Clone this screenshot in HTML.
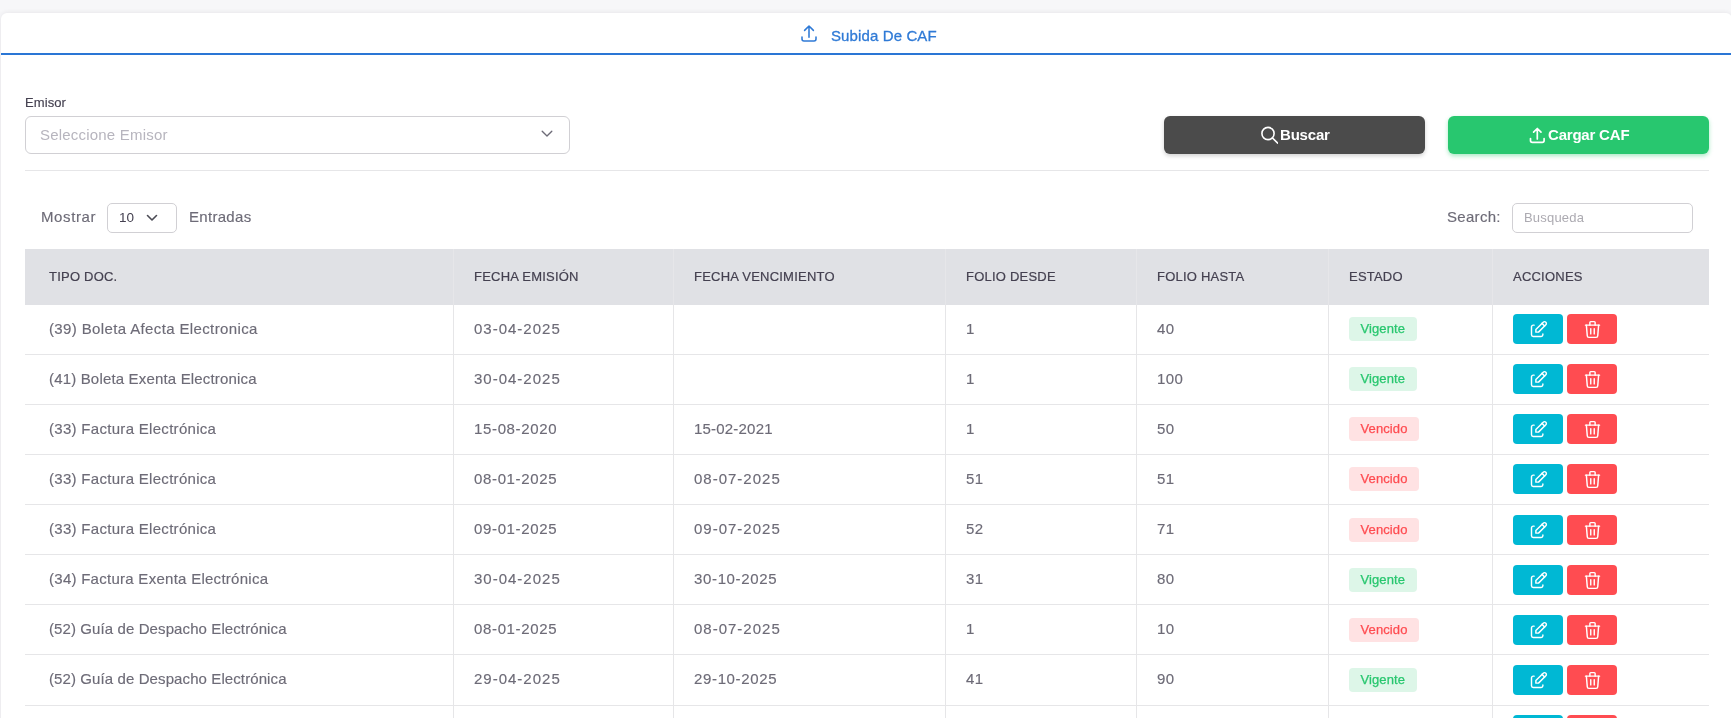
<!DOCTYPE html>
<html><head><meta charset="utf-8">
<style>
*{box-sizing:border-box;margin:0;padding:0}
html,body{width:1731px;height:718px;overflow:hidden}
body{will-change:transform;background:#f7f7f9;font-family:"Liberation Sans",sans-serif;color:#6f6b7d;position:relative}
.abs{position:absolute}
.card{position:absolute;left:1px;top:13px;width:1731px;height:800px;background:#fff;border-radius:6px;box-shadow:0 0 5px rgba(47,43,61,.1)}
.tabline{position:absolute;left:1px;top:53px;width:1730px;height:2px;background:#2a76d5}
.tabtxt{position:absolute;left:831px;top:27px;font-size:15px;font-weight:500;color:#2f7ad6;-webkit-text-stroke:.3px #2f7ad6;letter-spacing:.12px;white-space:nowrap;line-height:18px}
.lbl{position:absolute;left:25px;top:95px;font-size:13px;letter-spacing:.1px;color:#444050;-webkit-text-stroke:.15px #444050;line-height:15px}
.sel{position:absolute;left:25px;top:116px;width:545px;height:38px;border:1px solid #d1d0d4;border-radius:6px}
.sel span{position:absolute;left:14px;top:9px;font-size:15px;letter-spacing:.2px;color:#b7b5be;line-height:18px}
.btn{position:absolute;top:116px;height:38px;width:261px;border-radius:6px;color:#fff;font-size:15px;letter-spacing:-.2px;font-weight:bold;line-height:18px;box-shadow:0 2px 4px rgba(0,0,0,.18)}
.hr{position:absolute;left:25px;top:170px;width:1684px;height:1px;background:#e6e6e8}
.txt{position:absolute;font-size:15px;letter-spacing:.3px;line-height:18px;white-space:nowrap;color:#6d6b77;-webkit-text-stroke:.15px #6d6b77}
.box{position:absolute;border:1px solid #d1d0d4;border-radius:5px}
table{position:absolute;left:25px;top:249px;width:1684px;border-collapse:separate;border-spacing:0;table-layout:fixed}
th{height:56px;background:#e0e1e5;text-align:left;font-size:13px;font-weight:normal;color:#444050;-webkit-text-stroke:.2px #444050;padding:0 0 2px 20px;border-left:1px solid #e6e6e9;letter-spacing:.22px}
th:first-child{padding-left:24px;border-left:none}
td{height:50px;font-size:15px;letter-spacing:.35px;padding:0 0 3px 20px;border-left:1px solid #e6e6e8;border-bottom:1px solid #e6e6e8;color:#6d6b77;-webkit-text-stroke:.15px #6d6b77}
tr:nth-child(8) td{height:51px}
td.d{letter-spacing:.6px}
td:first-child{padding-left:24px;border-left:none}
.badge{display:inline-block;height:24px;line-height:24px;padding:0 11.5px;border-radius:4px;font-size:13px;font-weight:normal;letter-spacing:.1px;position:relative;top:1px;-webkit-text-stroke:.25px currentColor}
tr:nth-child(5) .badge,tr:nth-child(6) .badge,tr:nth-child(7) .badge,tr:nth-child(5) .ab,tr:nth-child(6) .ab,tr:nth-child(7) .ab{top:2px}
.vig{background:#ddf6e8;color:#28c76f}
.ven{background:#ffe2e3;color:#ff4c51}
.ab{display:inline-flex;align-items:center;justify-content:center;width:50px;height:30px;border-radius:4px;vertical-align:middle;position:relative;top:1px}
.ed{background:#00b8d4}
.dl{background:#ff4c51;margin-left:4px}
</style></head><body>
<div class="card"></div>
<div class="tabline"></div>
<svg class="abs" style="left:799px;top:23px" width="20" height="20" viewBox="0 0 20 20"><path d="M3 14v2a2 2 0 0 0 2 2h10a2 2 0 0 0 2-2v-2M10 14.3V3M5.6 7.4l4.4-4.4 4.4 4.4" fill="none" stroke="#2f7ad6" stroke-width="1.55" stroke-linecap="round" stroke-linejoin="round"/></svg>
<div class="tabtxt">Subida De CAF</div>

<div class="lbl">Emisor</div>
<div class="sel"><span>Seleccione Emisor</span>
<svg class="abs" style="left:514px;top:10.5px" width="14" height="12" viewBox="0 0 14 12"><path d="M2.2 3.2l4.8 4.8 4.8-4.8" fill="none" stroke="#6d6b77" stroke-width="1.35" stroke-linecap="round" stroke-linejoin="round"/></svg>
</div>

<div class="btn" style="left:1164px;background:#4b4b4b"><svg class="abs" style="left:96px;top:10px" width="18" height="18" viewBox="0 0 18 18"><circle cx="8" cy="7.5" r="6.1" fill="none" stroke="#fff" stroke-width="1.6"/><path d="M12.5 12l5 5" stroke="#fff" stroke-width="1.7" stroke-linecap="round"/></svg><span class="abs" style="left:116px;top:9.5px">Buscar</span></div>
<div class="btn" style="left:1448px;background:#28c76f;box-shadow:0 2px 4px rgba(40,199,111,.4)"><svg class="abs" style="left:81px;top:10px" width="18" height="18" viewBox="0 0 18 18"><path d="M1.5 12.5v2a1.8 1.8 0 0 0 1.8 1.8h10a1.8 1.8 0 0 0 1.8-1.8v-2M8.3 13V2.5M4.6 6.2l3.7-3.7 3.7 3.7" fill="none" stroke="#fff" stroke-width="1.7" stroke-linecap="round" stroke-linejoin="round"/></svg><span class="abs" style="left:100px;top:9.5px">Cargar CAF</span></div>
<div class="hr"></div>

<div class="txt" style="left:41px;top:208px;letter-spacing:.6px">Mostrar</div>
<div class="box" style="left:107px;top:203px;width:70px;height:30px"><span class="abs" style="left:11px;top:6px;font-size:13.5px;color:#444050;line-height:15px">10</span><svg class="abs" style="left:38px;top:10px" width="12" height="8" viewBox="0 0 12 8"><path d="M1.5 1.5l4.5 4.5 4.5-4.5" fill="none" stroke="#4b4b55" stroke-width="1.6" stroke-linecap="round" stroke-linejoin="round"/></svg></div>
<div class="txt" style="left:189px;top:208px">Entradas</div>
<div class="txt" style="left:1447px;top:208px;letter-spacing:.3px">Search:</div>
<div class="box" style="left:1512px;top:203px;width:181px;height:30px"><span class="abs" style="left:11px;top:6px;font-size:13px;letter-spacing:.2px;color:#acaab1;line-height:15px">Busqueda</span></div>

<table>
<colgroup><col style="width:428px"><col style="width:220px"><col style="width:272px"><col style="width:191px"><col style="width:192px"><col style="width:164px"><col></colgroup>
<thead><tr><th>TIPO DOC.</th><th>FECHA EMISIÓN</th><th>FECHA VENCIMIENTO</th><th>FOLIO DESDE</th><th>FOLIO HASTA</th><th>ESTADO</th><th>ACCIONES</th></tr></thead>
<tbody>
<tr><td style="letter-spacing:0.37px">(39) Boleta Afecta Electronica</td><td class="d" style="letter-spacing:1.0px">03-04-2025</td><td></td><td>1</td><td>40</td><td><span class="badge vig">Vigente</span></td><td><span class="ab ed"><svg width="21" height="21" viewBox="0 0 24 24" fill="none" stroke="#fff" stroke-width="1.65" style="position:relative;top:.5px" stroke-linecap="round" stroke-linejoin="round"><path d="M7 7h-1a2 2 0 0 0 -2 2v9a2 2 0 0 0 2 2h9a2 2 0 0 0 2 -2v-1"/><path d="M20.385 6.585a2.1 2.1 0 0 0 -2.97 -2.97l-8.415 8.385v3h3l8.385 -8.415z"/><path d="M16 5l3 3"/></svg></span><span class="ab dl"><svg width="21" height="21" viewBox="0 0 24 24" fill="none" stroke="#fff" stroke-width="1.65" style="position:relative;top:.5px" stroke-linecap="round" stroke-linejoin="round"><path d="M4 7l16 0"/><path d="M10 11l0 6"/><path d="M14 11l0 6"/><path d="M5 7l1 12a2 2 0 0 0 2 2h8a2 2 0 0 0 2 -2l1 -12"/><path d="M9 7v-3a1 1 0 0 1 1 -1h4a1 1 0 0 1 1 1v3"/></svg></span></td></tr>
<tr><td style="letter-spacing:0.17px">(41) Boleta Exenta Electronica</td><td class="d" style="letter-spacing:1.0px">30-04-2025</td><td></td><td>1</td><td>100</td><td><span class="badge vig">Vigente</span></td><td><span class="ab ed"><svg width="21" height="21" viewBox="0 0 24 24" fill="none" stroke="#fff" stroke-width="1.65" style="position:relative;top:.5px" stroke-linecap="round" stroke-linejoin="round"><path d="M7 7h-1a2 2 0 0 0 -2 2v9a2 2 0 0 0 2 2h9a2 2 0 0 0 2 -2v-1"/><path d="M20.385 6.585a2.1 2.1 0 0 0 -2.97 -2.97l-8.415 8.385v3h3l8.385 -8.415z"/><path d="M16 5l3 3"/></svg></span><span class="ab dl"><svg width="21" height="21" viewBox="0 0 24 24" fill="none" stroke="#fff" stroke-width="1.65" style="position:relative;top:.5px" stroke-linecap="round" stroke-linejoin="round"><path d="M4 7l16 0"/><path d="M10 11l0 6"/><path d="M14 11l0 6"/><path d="M5 7l1 12a2 2 0 0 0 2 2h8a2 2 0 0 0 2 -2l1 -12"/><path d="M9 7v-3a1 1 0 0 1 1 -1h4a1 1 0 0 1 1 1v3"/></svg></span></td></tr>
<tr><td style="letter-spacing:0.3px">(33) Factura Electrónica</td><td class="d" style="letter-spacing:0.65px">15-08-2020</td><td class="d" style="letter-spacing:0.2px">15-02-2021</td><td>1</td><td>50</td><td><span class="badge ven">Vencido</span></td><td><span class="ab ed"><svg width="21" height="21" viewBox="0 0 24 24" fill="none" stroke="#fff" stroke-width="1.65" style="position:relative;top:.5px" stroke-linecap="round" stroke-linejoin="round"><path d="M7 7h-1a2 2 0 0 0 -2 2v9a2 2 0 0 0 2 2h9a2 2 0 0 0 2 -2v-1"/><path d="M20.385 6.585a2.1 2.1 0 0 0 -2.97 -2.97l-8.415 8.385v3h3l8.385 -8.415z"/><path d="M16 5l3 3"/></svg></span><span class="ab dl"><svg width="21" height="21" viewBox="0 0 24 24" fill="none" stroke="#fff" stroke-width="1.65" style="position:relative;top:.5px" stroke-linecap="round" stroke-linejoin="round"><path d="M4 7l16 0"/><path d="M10 11l0 6"/><path d="M14 11l0 6"/><path d="M5 7l1 12a2 2 0 0 0 2 2h8a2 2 0 0 0 2 -2l1 -12"/><path d="M9 7v-3a1 1 0 0 1 1 -1h4a1 1 0 0 1 1 1v3"/></svg></span></td></tr>
<tr><td style="letter-spacing:0.3px">(33) Factura Electrónica</td><td class="d" style="letter-spacing:0.65px">08-01-2025</td><td class="d" style="letter-spacing:1.0px">08-07-2025</td><td>51</td><td>51</td><td><span class="badge ven">Vencido</span></td><td><span class="ab ed"><svg width="21" height="21" viewBox="0 0 24 24" fill="none" stroke="#fff" stroke-width="1.65" style="position:relative;top:.5px" stroke-linecap="round" stroke-linejoin="round"><path d="M7 7h-1a2 2 0 0 0 -2 2v9a2 2 0 0 0 2 2h9a2 2 0 0 0 2 -2v-1"/><path d="M20.385 6.585a2.1 2.1 0 0 0 -2.97 -2.97l-8.415 8.385v3h3l8.385 -8.415z"/><path d="M16 5l3 3"/></svg></span><span class="ab dl"><svg width="21" height="21" viewBox="0 0 24 24" fill="none" stroke="#fff" stroke-width="1.65" style="position:relative;top:.5px" stroke-linecap="round" stroke-linejoin="round"><path d="M4 7l16 0"/><path d="M10 11l0 6"/><path d="M14 11l0 6"/><path d="M5 7l1 12a2 2 0 0 0 2 2h8a2 2 0 0 0 2 -2l1 -12"/><path d="M9 7v-3a1 1 0 0 1 1 -1h4a1 1 0 0 1 1 1v3"/></svg></span></td></tr>
<tr><td style="letter-spacing:0.3px">(33) Factura Electrónica</td><td class="d" style="letter-spacing:0.65px">09-01-2025</td><td class="d" style="letter-spacing:1.0px">09-07-2025</td><td>52</td><td>71</td><td><span class="badge ven">Vencido</span></td><td><span class="ab ed"><svg width="21" height="21" viewBox="0 0 24 24" fill="none" stroke="#fff" stroke-width="1.65" style="position:relative;top:.5px" stroke-linecap="round" stroke-linejoin="round"><path d="M7 7h-1a2 2 0 0 0 -2 2v9a2 2 0 0 0 2 2h9a2 2 0 0 0 2 -2v-1"/><path d="M20.385 6.585a2.1 2.1 0 0 0 -2.97 -2.97l-8.415 8.385v3h3l8.385 -8.415z"/><path d="M16 5l3 3"/></svg></span><span class="ab dl"><svg width="21" height="21" viewBox="0 0 24 24" fill="none" stroke="#fff" stroke-width="1.65" style="position:relative;top:.5px" stroke-linecap="round" stroke-linejoin="round"><path d="M4 7l16 0"/><path d="M10 11l0 6"/><path d="M14 11l0 6"/><path d="M5 7l1 12a2 2 0 0 0 2 2h8a2 2 0 0 0 2 -2l1 -12"/><path d="M9 7v-3a1 1 0 0 1 1 -1h4a1 1 0 0 1 1 1v3"/></svg></span></td></tr>
<tr><td style="letter-spacing:0.27px">(34) Factura Exenta Electrónica</td><td class="d" style="letter-spacing:1.0px">30-04-2025</td><td class="d" style="letter-spacing:0.65px">30-10-2025</td><td>31</td><td>80</td><td><span class="badge vig">Vigente</span></td><td><span class="ab ed"><svg width="21" height="21" viewBox="0 0 24 24" fill="none" stroke="#fff" stroke-width="1.65" style="position:relative;top:.5px" stroke-linecap="round" stroke-linejoin="round"><path d="M7 7h-1a2 2 0 0 0 -2 2v9a2 2 0 0 0 2 2h9a2 2 0 0 0 2 -2v-1"/><path d="M20.385 6.585a2.1 2.1 0 0 0 -2.97 -2.97l-8.415 8.385v3h3l8.385 -8.415z"/><path d="M16 5l3 3"/></svg></span><span class="ab dl"><svg width="21" height="21" viewBox="0 0 24 24" fill="none" stroke="#fff" stroke-width="1.65" style="position:relative;top:.5px" stroke-linecap="round" stroke-linejoin="round"><path d="M4 7l16 0"/><path d="M10 11l0 6"/><path d="M14 11l0 6"/><path d="M5 7l1 12a2 2 0 0 0 2 2h8a2 2 0 0 0 2 -2l1 -12"/><path d="M9 7v-3a1 1 0 0 1 1 -1h4a1 1 0 0 1 1 1v3"/></svg></span></td></tr>
<tr><td style="letter-spacing:0.1px">(52) Guía de Despacho Electrónica</td><td class="d" style="letter-spacing:0.65px">08-01-2025</td><td class="d" style="letter-spacing:1.0px">08-07-2025</td><td>1</td><td>10</td><td><span class="badge ven">Vencido</span></td><td><span class="ab ed"><svg width="21" height="21" viewBox="0 0 24 24" fill="none" stroke="#fff" stroke-width="1.65" style="position:relative;top:.5px" stroke-linecap="round" stroke-linejoin="round"><path d="M7 7h-1a2 2 0 0 0 -2 2v9a2 2 0 0 0 2 2h9a2 2 0 0 0 2 -2v-1"/><path d="M20.385 6.585a2.1 2.1 0 0 0 -2.97 -2.97l-8.415 8.385v3h3l8.385 -8.415z"/><path d="M16 5l3 3"/></svg></span><span class="ab dl"><svg width="21" height="21" viewBox="0 0 24 24" fill="none" stroke="#fff" stroke-width="1.65" style="position:relative;top:.5px" stroke-linecap="round" stroke-linejoin="round"><path d="M4 7l16 0"/><path d="M10 11l0 6"/><path d="M14 11l0 6"/><path d="M5 7l1 12a2 2 0 0 0 2 2h8a2 2 0 0 0 2 -2l1 -12"/><path d="M9 7v-3a1 1 0 0 1 1 -1h4a1 1 0 0 1 1 1v3"/></svg></span></td></tr>
<tr><td style="letter-spacing:0.1px">(52) Guía de Despacho Electrónica</td><td class="d" style="letter-spacing:1.0px">29-04-2025</td><td class="d" style="letter-spacing:0.65px">29-10-2025</td><td>41</td><td>90</td><td><span class="badge vig">Vigente</span></td><td><span class="ab ed"><svg width="21" height="21" viewBox="0 0 24 24" fill="none" stroke="#fff" stroke-width="1.65" style="position:relative;top:.5px" stroke-linecap="round" stroke-linejoin="round"><path d="M7 7h-1a2 2 0 0 0 -2 2v9a2 2 0 0 0 2 2h9a2 2 0 0 0 2 -2v-1"/><path d="M20.385 6.585a2.1 2.1 0 0 0 -2.97 -2.97l-8.415 8.385v3h3l8.385 -8.415z"/><path d="M16 5l3 3"/></svg></span><span class="ab dl"><svg width="21" height="21" viewBox="0 0 24 24" fill="none" stroke="#fff" stroke-width="1.65" style="position:relative;top:.5px" stroke-linecap="round" stroke-linejoin="round"><path d="M4 7l16 0"/><path d="M10 11l0 6"/><path d="M14 11l0 6"/><path d="M5 7l1 12a2 2 0 0 0 2 2h8a2 2 0 0 0 2 -2l1 -12"/><path d="M9 7v-3a1 1 0 0 1 1 -1h4a1 1 0 0 1 1 1v3"/></svg></span></td></tr>
<tr><td style="letter-spacing:0.1px">(52) Guía de Despacho Electrónica</td><td class="d" style="letter-spacing:1.0px">29-04-2025</td><td class="d" style="letter-spacing:0.65px">29-10-2025</td><td>41</td><td>90</td><td><span class="badge vig">Vigente</span></td><td><span class="ab ed"><svg width="21" height="21" viewBox="0 0 24 24" fill="none" stroke="#fff" stroke-width="1.65" style="position:relative;top:.5px" stroke-linecap="round" stroke-linejoin="round"><path d="M7 7h-1a2 2 0 0 0 -2 2v9a2 2 0 0 0 2 2h9a2 2 0 0 0 2 -2v-1"/><path d="M20.385 6.585a2.1 2.1 0 0 0 -2.97 -2.97l-8.415 8.385v3h3l8.385 -8.415z"/><path d="M16 5l3 3"/></svg></span><span class="ab dl"><svg width="21" height="21" viewBox="0 0 24 24" fill="none" stroke="#fff" stroke-width="1.65" style="position:relative;top:.5px" stroke-linecap="round" stroke-linejoin="round"><path d="M4 7l16 0"/><path d="M10 11l0 6"/><path d="M14 11l0 6"/><path d="M5 7l1 12a2 2 0 0 0 2 2h8a2 2 0 0 0 2 -2l1 -12"/><path d="M9 7v-3a1 1 0 0 1 1 -1h4a1 1 0 0 1 1 1v3"/></svg></span></td></tr>
</tbody>
</table>
</body></html>
